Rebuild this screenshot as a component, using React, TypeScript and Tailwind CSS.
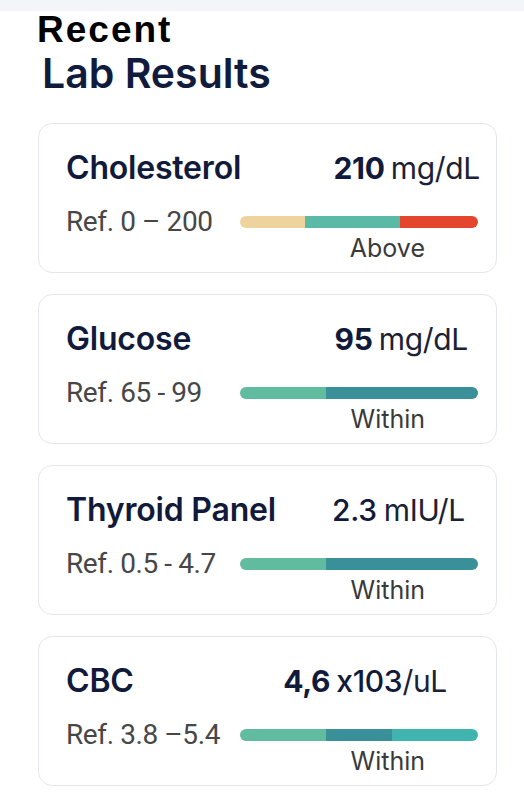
import React from "react";

type Seg = { w: number; c: string };
type Item = {
  name: string;
  num: string;
  mid?: string;
  unit: string;
  ref: string;
  label: string;
  segs: Seg[];
  pr: string;
};

const items: Item[] = [
  {
    name: "Cholesterol",
    num: "210",
    unit: "mg/dL",
    ref: "Ref. 0 – 200",
    label: "Above",
    segs: [
      { w: 65, c: "bg-[#efd39c]" },
      { w: 95, c: "bg-[#5bbaa6]" },
      { w: 78, c: "bg-[#e4462d]" },
    ],
    pr: "pr-[16px]",
  },
  {
    name: "Glucose",
    num: "95",
    unit: "mg/dL",
    ref: "Ref. 65 - 99",
    label: "Within",
    segs: [
      { w: 86, c: "bg-[#61bb9f]" },
      { w: 152, c: "bg-[#3a9099]" },
    ],
    pr: "pr-[28px]",
  },
  {
    name: "Thyroid Panel",
    num: "",
    mid: "2.3",
    unit: "mIU/L",
    ref: "Ref. 0.5 - 4.7",
    label: "Within",
    segs: [
      { w: 86, c: "bg-[#61bb9f]" },
      { w: 152, c: "bg-[#3a9099]" },
    ],
    pr: "pr-[31px]",
  },
  {
    name: "CBC",
    num: "4,6",
    mid: "x103",
    unit: "/uL",
    ref: "Ref. 3.8 –5.4",
    label: "Within",
    segs: [
      { w: 86, c: "bg-[#61bb9f]" },
      { w: 66, c: "bg-[#3a9099]" },
      { w: 86, c: "bg-[#40b5b0]" },
    ],
    pr: "pr-[49px]",
  },
];

function Card({ it }: { it: Item }) {
  return (
    <div className="w-[459px] h-[150px] rounded-[14px] border border-[#e3e6ec] bg-white pl-[27px] flex flex-col">
      <div className={`flex justify-between items-baseline pt-[24px] leading-[40px] ${it.pr}`}>
        <span className="text-[32px] font-semibold text-[#111a3b] tracking-[-0.2px]">{it.name}</span>
        <span className="flex items-baseline text-[30px] text-[#1c2235] tracking-[-0.3px]">
          {it.num && <span className="font-bold text-[#111a3b] mr-[6px]">{it.num}</span>}
          {it.mid && (
            <span className={`font-medium text-[#111a3b] ${it.num ? "" : "mr-[7px]"}`}>{it.mid}</span>
          )}
          <span className="font-normal">{it.unit}</span>
        </span>
      </div>
      <div className="flex items-start mt-[20px] h-[28px]">
        <span
          className="w-[174px] shrink-0 text-[28px] leading-[28px] text-[#474747] tracking-[-0.4px] whitespace-nowrap"
          style={{ fontFamily: "Roboto, 'Noto Sans', sans-serif" }}
        >
          {it.ref}
        </span>
        <div className="mt-[8px] h-[12px] w-[238px] rounded-full overflow-hidden flex">
          {it.segs.map((s, i) => (
            <div key={i} className={`h-full ${s.c}`} style={{ width: s.w }} />
          ))}
        </div>
      </div>
      <div className="flex justify-end pr-[71px] text-[25px] leading-[24px] text-[#3a3a3a]">{it.label}</div>
    </div>
  );
}

export default function App() {
  return (
    <div
      className="w-[524px] h-[796px] bg-white overflow-hidden"
      style={{ fontFamily: "Inter, 'Noto Sans', sans-serif" }}
    >
      <div className="h-[11px] bg-[#f4f5f9]" />
      <div
        className="pl-[37px] mt-[1px] text-[37px] leading-[36px] font-bold text-black tracking-[2px]"
        style={{ fontFamily: "'Liberation Sans', Arial, sans-serif" }}
      >
        Recent
      </div>
      <div className="pl-[42px] mt-[3px] text-[41px] leading-[44px] font-semibold text-[#111c3d]">Lab Results</div>
      <div className="mt-[28px] pl-[38px] flex flex-col gap-[21px]">
        {items.map((it) => (
          <Card key={it.name} it={it} />
        ))}
      </div>
    </div>
  );
}
